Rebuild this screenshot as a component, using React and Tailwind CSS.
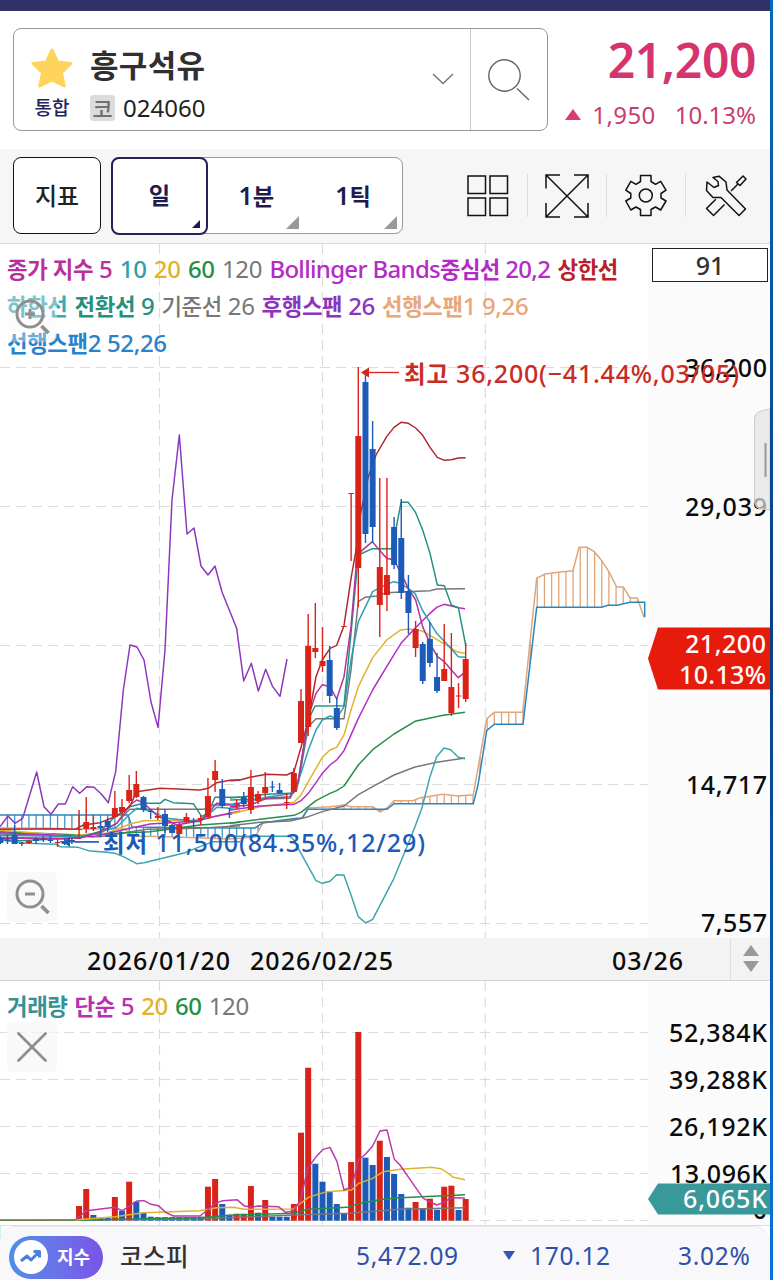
import React from "react";

/* Bar i is counted back from the newest bar */
const barX = (i) => 465.7 - 7.16 * i;

const RED = "#d92318";
const BLUE = "#1c5bb8";

/* [index, colour, bodyTop, bodyBottom, high, low] */
const candles = [
  [0, "r", 659, 699, 643, 702], [1, "r", 695.5, 696.5, 683, 708], [2, "r", 687, 713, 633, 716],
  [3, "r", 669, 681, 624, 681], [4, "b", 677, 691, 653, 693], [5, "b", 639, 663, 622, 667],
  [6, "b", 644, 681, 642, 684], [7, "r", 629, 648, 621, 657], [8, "b", 591, 613, 575, 634],
  [9, "b", 538, 593, 499, 599], [10, "b", 527, 565, 517, 569], [11, "r", 575, 595, 478, 611],
  [12, "r", 567, 605, 478, 637], [13, "b", 449, 527, 421, 543], [14, "b", 382, 534, 373, 543],
  [15, "r", 436, 568, 367, 607], [16, "r", 493, 494, 493, 561], [17, "r", 626, 627, 626, 627],
  [18, "b", 708, 728, 698, 730], [19, "b", 660, 696, 646, 703], [20, "r", 661, 666, 627, 672],
  [21, "r", 648, 652, 603, 658], [22, "r", 646, 727, 614, 736], [23, "r", 701, 743, 689, 743],
  [24, "r", 773, 792, 768, 793], [25, "r", 802, 803, 793, 809], [26, "b", 790, 793, 783, 794],
  [27, "b", 786.5, 787.5, 781, 792], [28, "r", 787, 793, 772, 797], [29, "r", 794, 801, 791, 804],
  [30, "r", 787, 810, 770, 814], [31, "b", 797, 804, 792, 807], [32, "r", 803, 804, 799, 809],
  [33, "b", 813.5, 814.5, 808, 818], [34, "b", 789, 806, 779, 808], [35, "r", 771, 780, 760, 792],
  [36, "r", 796, 817, 778, 819], [37, "r", 818, 820, 815, 825], [38, "b", 821, 822, 818, 827],
  [39, "r", 817, 822, 813, 823], [40, "r", 825, 834, 823, 834], [41, "b", 825, 833, 824, 833],
  [42, "b", 814, 826, 809, 833], [43, "r", 816, 818, 807, 820], [44, "b", 811, 812, 809, 819],
  [45, "b", 797, 810, 796, 812], [46, "r", 784, 797, 771, 798], [47, "r", 790, 801, 775, 803],
  [48, "r", 807, 812, 799, 815], [49, "r", 808, 817, 791, 817], [50, "b", 821, 827, 818, 832],
  [51, "b", 826, 828, 822, 837], [52, "r", 827, 829, 815, 831], [53, "r", 822, 829, 797, 833],
  [54, "r", 829, 830, 810, 839], [55, "b", 840, 842, 838, 844], [56, "b", 841, 844, 838, 845],
  [57, "r", 842, 843, 839, 847], [58, "b", 840, 841, 836, 843], [59, "b", 839, 840, 836, 842],
  [60, "b", 839, 841, 837, 844], [61, "r", 841, 843, 840, 844], [62, "r", 843, 844, 842, 846],
  [63, "b", 835, 844, 825, 844], [64, "b", 840, 841, 835, 844], [65, "b", 838, 843, 836, 844],
];

/* volume bar heights, newest first */
const volumes = [
  [21.7, "r"], [10.7, "b"], [35, "r"], [34, "r"], [11, "b"], [22, "r"], [12, "b"], [18.7, "r"],
  [13, "b"], [26.7, "b"], [46.7, "b"], [63.7, "b"], [80, "r"], [55.7, "b"], [63, "b"], [188.7, "r"],
  [58.7, "r"], [7, "b"], [16.7, "b"], [29, "b"], [39, "b"], [57, "b"], [153, "r"], [88, "r"],
  [16.7, "r"], [4, "b"], [4, "b"], [4, "b"], [20.7, "r"], [8, "b"], [34.7, "r"], [7, "r"],
  [7, "r"], [6, "b"], [16.7, "b"], [41.7, "r"], [34, "r"], [4, "b"], [3.5, "b"], [3.5, "b"],
  [3.5, "b"], [3.5, "b"], [3.5, "b"], [3.5, "b"], [4, "b"], [8, "b"], [19, "b"], [39, "r"],
  [10, "b"], [23.7, "r"], [3, "b"], [3, "b"], [5.7, "b"], [31.7, "r"], [14.7, "r"],
];

/* Ichimoku cloud edges: leading span 1 and leading span 2 */
const spanA = [
  [0, 829], [125, 829], [132, 836], [175, 837], [230, 839], [255, 837], [263, 823], [297, 819], [302, 818], [308, 808],
  [330, 806.7], [344, 805], [351, 806.7], [373, 806.7], [380, 812], [387, 808], [394, 800.7], [413, 800.7], [420, 797.7],
  [443, 794.3], [458, 796], [473.3, 794.7], [486.7, 719], [494.3, 712.3], [522.7, 712.3], [536.7, 578.3], [545, 574],
  [558, 572.3], [573, 570.7], [579, 547.3], [587, 547.3], [594.3, 551.7], [601.7, 560.7], [609.3, 572.3], [616.7, 587],
  [623.3, 587], [630, 598], [637.3, 598], [644, 617.3],
];
const spanB = [
  [0, 815], [128, 815], [132, 827], [230, 828], [255, 828], [263, 822.7], [297, 818.3], [302, 818.3], [308, 809.3],
  [387, 809.3], [394, 803.7], [473.3, 803.7], [478, 785], [486.7, 730.7], [494.3, 724.3], [523, 724.3], [536.7, 607.3],
  [601.7, 607.3], [608, 605.3], [617, 605.3], [630, 602.3], [644.7, 602.3], [644.7, 617.3],
];
const path = (pts) => pts.map((p) => p.join(",")).join(" ");
const yAt = (pts, x) => {
  for (let k = 1; k < pts.length; k++) {
    if (x <= pts[k][0]) {
      const [x0, y0] = pts[k - 1];
      const [x1, y1] = pts[k];
      return x1 === x0 ? y1 : y0 + ((y1 - y0) * (x - x0)) / (x1 - x0);
    }
  }
  return pts[pts.length - 1][1];
};
const hatch = Array.from({ length: 90 }, (_, k) => barX(k - 24)).filter((x) => x > 2 && x < 640);

const Line = ({ c, p }) => (
  <polyline points={p} fill="none" stroke={c} strokeWidth="4.4" strokeLinejoin="round" />
);

/* Hangul is set slightly smaller and heavier than the digits beside it */
const Ko = ({ children }) => <span className="text-[0.93em] font-bold">{children}</span>;
const KoThin = ({ children }) => <span className="text-[0.93em] font-medium">{children}</span>;

const AxisText = ({ y, w, children }) => (
  <text x={767} y={y} textAnchor="end" textLength={w} fontSize="25" fontWeight="500" fill="#0b0b0b">
    {children}
  </text>
);

const Grid = ({ y1, y2, rows }) => (
  <g stroke="#dcdcdc" strokeWidth="1.2" strokeDasharray="10 6">
    {[159.5, 322.5, 485.3].map((x) => <line key={x} x1={x} x2={x} y1={y1} y2={y2} />)}
    {rows.map((y) => <line key={y} x1="0" x2="648" y1={y} y2={y} />)}
  </g>
);

function Header() {
  return (
    <header className="flex h-[138px] bg-white pl-[13px] pt-[17px]">
      <div className="flex h-[103px] w-[535px] rounded-lg border-[1.5px] border-[#999]">
        <div className="flex w-[76px] flex-col items-center pt-[18px]">
          <svg width="44" height="42" viewBox="0 0 44 42">
            <path d="M22 3 L27.6 15 L41 16.4 L31.4 25.8 L34.3 39 L22 32.8 L9.7 39 L12.6 25.8 L3 16.4 L16.4 15 Z" fill="#ffd45c" stroke="#ffd45c" strokeWidth="3" strokeLinejoin="round" />
          </svg>
          <span className="mt-[6px] text-[19px] font-medium leading-[26px] text-[#25235c]">통합</span>
        </div>
        <div className="w-[337px] pt-[16px]">
          <div className="text-[31px] font-bold leading-[40px] tracking-[0.3px] text-[#303030]">흥구석유</div>
          <div className="mt-[10px] flex items-center gap-[8px]">
            <span className="flex h-[26px] w-[25px] items-center justify-center rounded-[3px] bg-[#dcdcdc] text-[22px] font-medium leading-none text-[#707070]">코</span>
            <span className="text-[24px] leading-[26px] text-[#222]">024060</span>
          </div>
        </div>
        <div className="flex w-[43px] items-center">
          <svg width="22" height="12" viewBox="0 0 22 12" className="ml-[5px] -mt-[2px]">
            <path d="M1 1 L11 10.5 L21 1" fill="none" stroke="#777" strokeWidth="1.5" />
          </svg>
        </div>
        <div className="flex flex-1 items-center justify-center border-l border-[#ccc]">
          <svg width="44" height="44" viewBox="0 0 44 44">
            <circle cx="17.5" cy="17.5" r="15.7" fill="none" stroke="#666" strokeWidth="1.4" />
            <path d="M30 30.5 L42 42" stroke="#666" strokeWidth="1.4" />
          </svg>
        </div>
      </div>
      <div className="flex flex-1 flex-col items-end pr-[14px]">
        <div className="mt-[5px] text-[48px] font-semibold leading-[54px] tracking-[-0.4px] text-[#d5346f]">21,200</div>
        <div className="mt-[13px] flex items-center text-[24px] leading-[30px] text-[#c83d70]">
          <svg width="16" height="12" viewBox="0 0 16 12" className="mr-[11px]"><path d="M8 0 L16 11 H0Z" fill="#d83b78" /></svg>
          <span className="mr-[19px] tracking-[0.4px]">1,950</span>
          <span>10.13%</span>
        </div>
      </div>
    </header>
  );
}

const Corner = ({ dark }) => (
  <svg width="13" height="13" viewBox="0 0 13 13" className="absolute bottom-[4px] right-[5px]">
    <path d={dark ? "M12 4 V12 H4 Z" : "M13 0 V13 H0 Z"} fill={dark ? "#1e1b4e" : "#999"} />
  </svg>
);

function Toolbar() {
  return (
    <div className="flex h-[95px] items-start border-b border-[#ddd] bg-[#f6f6f7] pl-[13px] pt-[8px]">
      <div className="flex h-[77px] w-[88px] items-center justify-center rounded-lg border-[1.5px] border-[#111] bg-white text-[24px] font-medium text-[#222]">지표</div>
      <div className="ml-[10px] flex h-[77px] w-[292px] rounded-lg border-[1.5px] border-[#999] bg-white text-[25px] font-semibold text-[#1e1b4e]">
        <div className="relative -my-[1.5px] -ml-[1.5px] flex w-[98px] items-center justify-center rounded-lg border-2 border-[#252157]"><Ko>일</Ko><Corner dark /></div>
        <div className="relative flex w-[96px] items-center justify-center"><span>1<Ko>분</Ko></span><Corner /></div>
        <div className="relative flex w-[98px] items-center justify-center"><span>1<Ko>틱</Ko></span><Corner /></div>
      </div>
      <div className="ml-[44px] mt-[17px] flex h-[43px] flex-1 divide-x divide-[#ddd]">
        <div className="flex w-[81px] items-center pl-[20px]">
          <svg width="42" height="42" viewBox="0 0 42 42" fill="none" stroke="#111" strokeWidth="1.5">
            <rect x="1" y="1" width="17.5" height="17.5" /><rect x="23" y="1" width="17.5" height="17.5" />
            <rect x="1" y="23" width="17.5" height="17.5" /><rect x="23" y="23" width="17.5" height="17.5" />
          </svg>
        </div>
        <div className="flex w-[79px] items-center justify-center">
          <svg width="44" height="44" viewBox="0 0 44 44" fill="none" stroke="#111" strokeWidth="1.5">
            <path d="M1 14.500 V1 H15 M29 1 H43 V14.500 M43 29 V43 H29 M15 43 H1 V29 M1 1 L43 43 M43 1 L1 43" />
          </svg>
        </div>
        <div className="flex w-[79px] items-center justify-center">
          <svg width="42" height="43" viewBox="0 0 42 43" fill="none" stroke="#111" strokeWidth="1.5" strokeLinejoin="round">
            <path d="M15.500 1.500 H26 V7.500 L30.500 10.300 L35.700 7.300 L41 16.200 L36 19.500 V24 L41 27 L35.700 36 L30.500 33 L26 35.500 V41.500 H15.500 V35.500 L11 33 L5.800 36 L.8 27 L5.800 24 V19.500 L.8 16.200 L5.800 7.300 L11 10.300 L15.500 7.500 Z" />
            <circle cx="20.800" cy="21.500" r="6.500" />
          </svg>
        </div>
        <div className="flex w-[80px] items-center justify-center">
          <svg width="42" height="42" viewBox="0 0 42 42" fill="none" stroke="#111" strokeWidth="1.5" strokeLinejoin="round">
            <path d="M8 2.500 L14 1.200 L21 7 L22 15 L40.500 34 L34 40.500 L16 22.500 L8 22.500 L1.500 15.500 L2 7 L9 12.500 L13.500 10.500 L13 6.500 Z" />
            <path d="M26 16 L33 9 M31.500 7.500 L38 1 L41 4 L35 10.500 Z" />
            <path d="M10.800 24.200 L1.500 33.500 L8.500 40.500 L19.500 29.500" />
          </svg>
        </div>
      </div>
    </div>
  );
}

function Legend() {
  return (
    <div className="absolute left-[7px] top-[7px] whitespace-nowrap text-[24px] font-medium leading-[36px] tracking-[-0.35px]">
      <div className="flex gap-[7.3px]">
        <span className="text-[#b92f9b]"><Ko>종가 지수</Ko> 5</span>
        <span className="text-[#2a9fb5]">10</span>
        <span className="text-[#dfb32c]">20</span>
        <span className="text-[#239049]">60</span>
        <span className="font-normal text-[#777]">120</span>
        <span className="tracking-[-0.68px] text-[#b32cc5]">Bollinger Bands<Ko>중심선</Ko> 20,2</span>
        <span className="text-[#b9202a]"><Ko>상한선</Ko></span>
      </div>
      <div className="flex gap-[7px]">
        <span className="text-[#3aabb0]"><Ko>하한선</Ko></span>
        <span className="text-[#23917e]"><Ko>전환선</Ko> 9</span>
        <span className="font-normal text-[#777]"><KoThin>기준선</KoThin> 26</span>
        <span className="text-[#8b35bd]"><Ko>후행스팬</Ko> 26</span>
        <span className="text-[#e9a779]"><Ko>선행스팬</Ko>1 9,26</span>
      </div>
      <div className="text-[#2783cc]"><Ko>선행스팬</Ko>2 52,26</div>
    </div>
  );
}

const ZoomButton = ({ plus, pos }) => (
  <div className={"absolute left-[7px] flex h-[50px] w-[50px] items-center justify-center rounded-md " + (plus ? "bg-[#f7f7f7]/35 " : "bg-[#f7f7f7]/70 ") + pos}>
    <svg width="36" height="36" viewBox="0 0 36 36" fill="none" stroke="#8f8f8f" strokeWidth="3">
      <circle cx="16" cy="15" r="13" />
      <path d={plus ? "M11 15 H21 M16 10 V20" : "M11 15 H21"} />
      <path d="M27.500 27 L34.500 34" strokeWidth="3.800" />
    </svg>
  </div>
);

function PricePanel() {
  return (
    <section className="relative h-[694px] bg-white">
      <svg width="770" height="694" viewBox="0 244 770 694" className="block">
        <rect x="648" y="244" width="122" height="694" fill="#fbfbfb" />
        <Grid y1={244} y2={938} rows={[367.500, 506.500, 645.500, 784.500, 923.500]} />
        <g strokeWidth="1.3">
          {hatch.map((x) => {
            const a = yAt(spanA, x);
            const b = yAt(spanB, x);
            return <line key={x} x1={x} x2={x} y1={a} y2={b} stroke={a < b ? "#dfa477" : "#3d97c8"} />;
          })}
        </g>
        <polyline points={path(spanA)} fill="none" stroke="#e0a67c" strokeWidth="1.5" />
        <polyline points={path(spanB)} fill="none" stroke="#2d85bd" strokeWidth="1.5" />
        {/* early sessions */}
        <g transform="translate(0 690) scale(.33333)">
          <Line c="#777" p="0,432 300,440 440,418 600,415 720,407" />
          <Line c="#239049" p="0,425 240,435 450,425 600,405 720,397" />
          <Line c="#dfb32c" p="0,420 200,437 320,430 390,402 430,392 600,390 640,380 720,366" />
          <Line c="#e0a67c" p="0,414 140,415 240,418" />
          <Line c="#b32cc5" p="0,428 280,440 390,415 450,402 560,395 600,390 650,378 720,363" />
          <Line c="#777" p="0,442 200,447 300,430 350,400 389,358 610,358 640,345 720,345" />
          <Line c="#777" p="180,455 297,455" />
          <Line c="#2a9fb5" p="0,436 240,440 350,412 390,372 410,355 450,362 500,385 600,395 650,352 690,355 720,350" />
          <Line c="#23917e" p="0,448 60,452 240,443 300,425 340,385 389,350 430,340 480,340 495,328 520,338 580,341 605,380 625,368 645,322 720,322" />
          <Line c="#b92f9b" p="0,445 240,445 290,430 350,400 390,345 410,330 430,338 475,380 500,390 530,405 600,392 625,370 650,340 720,345" />
          <Line c="#3aa5ad" p="0,450 80,460 170,463 180,470 235,472 265,482 320,487 345,490 370,500 410,521 432,518 475,508 555,488 600,470 640,455 720,455" />
          <Line c="#bb2a2a" p="0,418 180,416 225,418 250,405 300,398 350,378 389,350 410,305 480,295 600,300 625,295 650,278 690,271 720,270" />
          <Line c="#8b35bd" p="0,410 24,378 45,400 68,385 110,246 132,350 153,373 175,342 196,342 218,290 239,310 261,290 282,292 304,312 325,338 347,245 370,0 390,-135 411,-129 432,-90 453,36 474,112 495,-120 516,-570 538,-765 561,-468 582,-486 603,-372 624,-345 645,-372 666,-294 690,-235" />
        </g>
        {/* rally and pullback */}
        <g transform="translate(230 560) scale(.33333)">
          <Line c="#777" p="0,797 90,787 180,783 235,770 277,755 342,738 385,704 428,680 492,645 555,621 620,607 705,594" />
          <Line c="#239049" p="0,790 90,778 192,766 213,757 258,722 300,700 320,692 342,678 385,615 428,569 492,522 555,484 640,466 662,463 705,457" />
          <Line c="#dfb32c" p="0,762 90,740 192,727 213,705 235,665 277,592 300,570 320,562 342,525 363,450 385,380 428,293 470,240 510,211 535,207 577,213 620,238 680,275 705,280" />
          <Line c="#b32cc5" p="0,750 90,738 192,733 213,722 235,700 258,668 277,640 300,615 320,600 342,572 385,475 428,390 470,320 513,250 555,205 600,160 620,142 642,133 662,137 685,143 705,146" />
          <Line c="#777" p="0,720 180,715 205,670 235,500 258,476 342,476 363,330 385,125 405,112 440,108 470,98 530,95 600,92 620,87 705,86" />
          <Line c="#2a9fb5" p="0,735 110,712 190,700 213,640 235,570 258,510 277,480 300,468 320,475 342,440 363,300 385,185 428,95 450,83 490,65 513,70 555,100 577,150 620,220 660,262 685,290 705,292" />
          <Line c="#23917e" p="0,714 110,703 180,700 200,690 215,600 235,480 255,438 342,437 363,220 385,-15 427,-34 485,-34 492,-60 513,-173 535,-173 557,-142 578,-90 600,-20 622,75 643,77 664,135 685,143 707,255" />
          <Line c="#b92f9b" p="0,740 60,735 110,715 180,710 205,660 235,470 258,400 277,374 300,380 320,417 342,350 363,200 380,0 392,-25 427,-55 450,-28 470,-5 492,0 513,40 535,85 557,120 578,200 600,250 622,290 643,305 664,330 685,353 707,335" />
          <Line c="#3aa5ad" p="0,829 180,829 192,840 213,880 258,962 277,970 300,964 320,944 342,946 363,1005 385,1070 407,1089 428,1078 492,955 535,850 555,800 577,740 600,650 620,590 642,564 662,569 685,592 705,596" />
          <Line c="#ad2730" p="0,662 30,660 60,652 110,643 170,645 192,635 205,590 215,555 235,480 258,350 277,300 300,265 320,256 342,197 364,50 380,-40 392,-140 415,-250 438,-315 470,-370 492,-398 513,-413 535,-410 557,-396 578,-374 600,-338 622,-308 643,-299 664,-301 685,-306 707,-307" />
          <Line c="#8b35bd" p="0,155 20,205 41,363 64,310 85,393 107,328 128,380 150,409 171,297" />
        </g>
        {candles.map(([i, c, t, b, h, l]) => {
          const x = barX(i);
          const col = c === "r" ? RED : BLUE;
          const w = b - t <= 1 ? 5.500 : 6;
          return (
            <g key={i} fill={col}>
              <rect x={x - 0.7} y={h} width="1.4" height={l - h} />
              <rect x={x - w / 2} y={t} width={w} height={b - t} />
            </g>
          );
        })}
        <path d="M368 372.500 H399" stroke={RED} strokeWidth="1.3" />
        <path d="M361 372.500 L369 367.500 V377.500 Z" fill={RED} />
        <path d="M75 842 H99" stroke={BLUE} strokeWidth="1.2" />
        <path d="M63 842 L70 837 V847 Z" fill={BLUE} />
        <text x="103" y="852" textLength="322" fontSize="25" fontWeight="500" fill={BLUE}><tspan fontSize="23.500" fontWeight="700">최저</tspan> 11,500(84.35%,12/29)</text>
        <AxisText y={377} w={82}>36,200</AxisText>
        <text x="404" y="382.500" textLength="335" fontSize="25" fontWeight="500" fill="#c92c24"><tspan fontSize="23.500" fontWeight="700">최고</tspan> 36,200(−41.44%,03/05)</text>
        <AxisText y={516} w={82}>29,039</AxisText>
        <AxisText y={794} w={81}>14,717</AxisText>
        <AxisText y={932} w={66}>7,557</AxisText>
        <path d="M648 658.500 L658 627.500 H770 V689.500 H658 Z" fill="#e61b0c" />
        <text x="766" y="653" textAnchor="end" textLength="81" fontSize="25" fontWeight="500" fill="#fff">21,200</text>
        <text x="766" y="684" textAnchor="end" textLength="87" fontSize="25" fontWeight="500" fill="#fff">10.13%</text>
        <path d="M770 409 L761 411 Q754.500 413 754.500 420 V501 Q754.500 508 761 509 L770 510 Z" fill="#e2e2e2" fillOpacity=".7" stroke="#ccc" />
        <path d="M765.500 443 V477" stroke="#999" strokeWidth="2" />
      </svg>
      <Legend />
      <div className="absolute left-[652px] top-[4px] flex h-[34px] w-[116px] items-center justify-center border-[1.5px] border-[#222] bg-white text-[25px] font-medium leading-none text-[#333]">91</div>
      <ZoomButton plus pos="top-[48px]" />
      <ZoomButton pos="top-[628px]" />
    </section>
  );
}

function DateBar() {
  return (
    <div className="flex h-[43px] items-center border-b border-[#d4d4d4] bg-[#f3f3f3] text-[25px] font-medium text-[#0b0b0b]">
      <span className="ml-[87px] mt-[3px] w-[163px] tracking-[1.05px]">2026/01/20</span>
      <span className="mt-[3px] w-[362px] tracking-[1.05px]">2026/02/25</span>
      <span className="mt-[3px] w-[118px] tracking-[1.05px]">03/26</span>
      <span className="flex h-full flex-1 items-center justify-center border-l border-[#ddd]">
        <svg width="18" height="28" viewBox="0 0 18 28" fill="#999"><path d="M9 0 L17 11 H1Z M1 16 H17 L9 27Z" /></svg>
      </span>
    </div>
  );
}

function VolumePanel() {
  return (
    <section className="relative h-[245px] border-b border-[#ddd] bg-white">
      <svg width="770" height="244" viewBox="0 981 770 244" className="block">
        <rect x="648" y="981" width="122" height="244" fill="#fbfbfb" />
        <Grid y1={981} y2={1225} rows={[1032.500, 1079.500, 1126.500, 1173.500, 1220.500]} />
        {volumes.map(([h, c], i) => (
          <rect key={i} x={barX(i) - 3} y={1220.700 - h} width="6" height={h} fill={c === "r" ? RED : BLUE} />
        ))}
        <g transform="translate(0 920) scale(.33333)">
          <Line c="#777" p="0,901 600,897 880,885 1050,880 1200,868 1395,863" />
          <Line c="#239049" p="0,901 225,901 600,893 700,885 880,880 925,868 1040,862 1080,850 1150,838 1200,833 1395,824" />
          <Line c="#dfb32c" p="0,900 225,900 345,890 430,878 600,872 650,863 700,862 732,868 880,867 925,832 980,815 1055,810 1076,790 1118,775 1150,755 1200,748 1295,742 1325,747 1345,760 1360,772 1395,779" />
          <Line c="#b93aa8" p="225,900 260,872 345,862 367,872 389,858 410,843 432,842 453,853 475,857 497,877 520,888 600,888 625,868 646,850 668,842 711,839 732,857 753,862 775,858 835,860 857,877 880,873 902,840 923,745 947,712 968,689 990,682 1011,725 1032,810 1055,800 1076,720 1097,702 1118,678 1140,633 1161,630 1183,718 1200,735 1245,800 1270,835 1310,855 1330,848 1355,833 1395,834" />
          <Line c="#6f7d50" p="0,901 225,901" />
        </g>
        <AxisText y={1041.500} w={98}>52,384K</AxisText>
        <AxisText y={1088.500} w={98}>39,288K</AxisText>
        <AxisText y={1135.500} w={98}>26,192K</AxisText>
        <AxisText y={1182.500} w={97}>13,096K</AxisText>
        <AxisText y={1219} w={13}>0</AxisText>
        <path d="M648 1199 L658 1183.500 H770 V1214.500 H658 Z" fill="#39999a" />
        <text x="767" y="1208" textAnchor="end" textLength="84" fontSize="25" fontWeight="500" fill="#fff">6,065K</text>
      </svg>
      <div className="absolute left-[7px] top-[7px] flex gap-[7px] whitespace-nowrap text-[24px] font-medium leading-[36px] tracking-[-0.35px]">
        <span className="text-[#349295]"><Ko>거래량</Ko></span>
        <span className="text-[#b92fae]"><Ko>단순</Ko> 5</span>
        <span className="text-[#dfb32c]">20</span>
        <span className="text-[#239049]">60</span>
        <span className="font-normal text-[#777]">120</span>
      </div>
      <div className="absolute left-[7px] top-[41px] flex h-[50px] w-[50px] items-center justify-center rounded-md bg-[#f7f7f7]/70">
        <svg width="30" height="30" viewBox="0 0 30 30"><path d="M1.500 1.500 L28.500 28.500 M28.500 1.500 L1.500 28.500" stroke="#8f8f8f" strokeWidth="2.800" strokeLinecap="round" /></svg>
      </div>
    </section>
  );
}

function IndexBar() {
  return (
    <footer className="flex h-[54px] items-center rounded-t-2xl border-t border-[#e8e8ea] bg-[#f8f8fb] pl-[9px] pt-[4px] text-[24.500px] text-[#3050a8]">
      <div className="mt-[3px] flex h-[43px] w-[94px] items-center rounded-full bg-linear-to-r from-[#4c8ee8] to-[#7a52e8] pl-[5px]">
        <span className="flex h-[34px] w-[34px] items-center justify-center rounded-full bg-white">
          <svg width="24" height="16" viewBox="0 0 24 16" fill="none" stroke="#4a80dc" strokeWidth="3" strokeLinejoin="round">
            <path d="M2 12 L8 7 L12 11 L20 3 M14.500 2.500 H20.500 V8.500" />
          </svg>
        </span>
        <span className="ml-[9px] text-[18px] font-bold text-white">지수</span>
      </div>
      <span className="ml-[17px] mt-[3px] w-[236px] text-[24.500px] font-medium tracking-[0.5px] text-[#333]">코스피</span>
      <span className="mt-[2px] w-[147px] tracking-[0.7px]">5,472.09</span>
      <svg width="12" height="10" viewBox="0 0 12 10"><path d="M0 0 H12 L6 9Z" fill="#3358b4" /></svg>
      <span className="ml-[15px] mt-[2px] w-[148px] tracking-[0.7px]">170.12</span>
      <span className="mt-[2px] tracking-[0.7px]">3.02%</span>
    </footer>
  );
}

export default function App() {
  return (
    <div className="flex h-[1280px] w-[773px] overflow-hidden bg-white font-['Noto_Sans','Noto_Sans_CJK_KR',sans-serif]">
      <main className="w-[770px] shrink-0 shadow-[inset_1px_0_0_#c8eef5]">
        <div className="h-[11px] bg-[#303267]" />
        <Header />
        <Toolbar />
        <PricePanel />
        <DateBar />
        <VolumePanel />
        <IndexBar />
      </main>
      <div className="flex-1 bg-linear-to-b from-[#0869bd] via-[#0b3f82] to-[#0874e0]" />
    </div>
  );
}
